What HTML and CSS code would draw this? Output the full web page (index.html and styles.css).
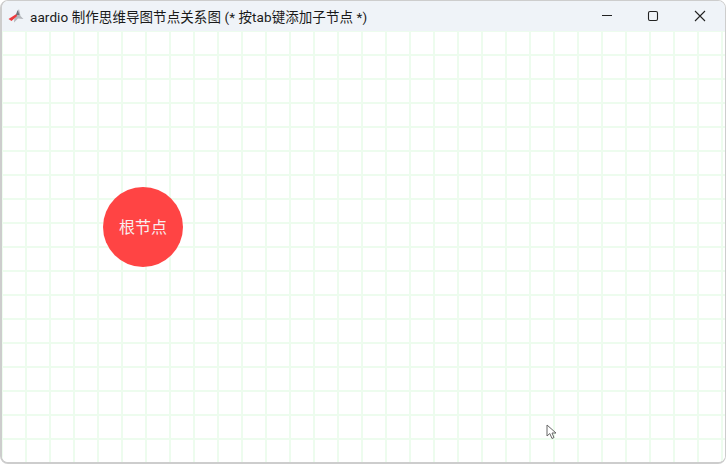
FILE: index.html
```html
<!DOCTYPE html>
<html lang="zh">
<head>
<meta charset="utf-8">
<title>aardio</title>
<link rel="stylesheet" href="styles.css">
</head>
<body>
<div class="window">
  <header class="titlebar">
    <svg class="app-icon" width="16" height="16" viewBox="0 0 16 16">
      <path d="M11 1 L12.5 8 L15.5 11 L10 10.5 L6 14.5 L6.5 8.5 Z" fill="#b4b7bc"/>
      <path d="M0.5 11 L10 5 L8.5 8.5 L3.5 13 Z" fill="#ee3a3e"/>
      <path d="M9.5 2 L11.5 7 L8 7 Z" fill="#6f747b"/>
    </svg>
    <span class="title">aardio 制作思维导图节点关系图 (* 按tab键添加子节点 *)</span>
    <div class="controls">
      <button class="ctl"><svg width="12" height="12" viewBox="0 0 12 12"><path d="M1 5.5H11" stroke="#222" stroke-width="1.1" fill="none"/></svg></button>
      <button class="ctl"><svg width="12" height="12" viewBox="0 0 12 12"><rect x="1.5" y="1.5" width="9" height="9" rx="1.5" stroke="#222" stroke-width="1.1" fill="none"/></svg></button>
      <button class="ctl"><svg width="12" height="12" viewBox="0 0 12 12"><path d="M1 1L11 11M11 1L1 11" stroke="#222" stroke-width="1.1" fill="none"/></svg></button>
    </div>
  </header>
  <main class="canvas">
    <div class="node">根节点</div>
    <svg class="cursor" width="12" height="18" viewBox="0 0 12 18">
      <path d="M1 1 V12 L3.8 9.5 L6 14.5 L8 13.5 L6 9 H10 Z" fill="#fff" stroke="#666" stroke-width="1"/>
    </svg>
  </main>
</div>
</body>
</html>
```
FILE: styles.css
```css
html, body {
  margin: 0;
  height: 100%;
  background: #fff;
  overflow: hidden;
}
.window {
  box-sizing: border-box;
  width: 726px;
  height: 464px;
  display: flex;
  flex-direction: column;
  border-style: solid;
  border-color: #cdcdcd;
  border-width: 1px 1px 2px 2px;
  border-radius: 8px;
  overflow: hidden;
  font-family: Roboto, "Noto Sans CJK SC", sans-serif;
}
.titlebar {
  flex: 0 0 30px;
  height: 30px;
  display: flex;
  align-items: center;
  padding: 0 2px 0 6px;
  background: #eff3f8;
  color: #1a1a1a;
  font-size: 13.5px;
  letter-spacing: 0.08px;
}
.app-icon {
  flex: none;
  margin-right: 6px;
}
.title {
  flex: 1;
  white-space: nowrap;
}
.controls {
  display: flex;
}
.ctl {
  width: 46.5px;
  height: 30px;
  padding: 0;
  border: 0;
  background: none;
  display: flex;
  align-items: center;
  justify-content: center;
}
.canvas {
  position: relative;
  flex: 1;
  background-color: #fff;
  background-image:
    linear-gradient(to right, #edfcee 2px, transparent 2px),
    linear-gradient(to bottom, #edfcee 2px, transparent 2px);
  background-size: 24px 24px;
  background-position: 23px 23px;
}
.node {
  position: absolute;
  left: 101px;
  top: 156px;
  width: 80px;
  height: 80px;
  box-sizing: border-box;
  padding-bottom: 2px;
  border-radius: 50%;
  background: #ff4444;
  color: #f8eeee;
  font-size: 16px;
  display: flex;
  align-items: center;
  justify-content: center;
}
.cursor {
  position: absolute;
  left: 544px;
  top: 393px;
}
```
